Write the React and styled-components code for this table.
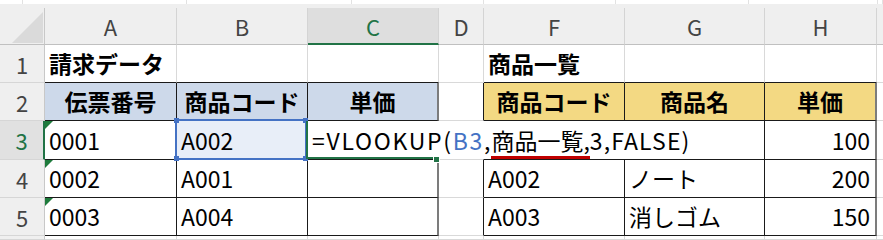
import React from 'react';
import styled, { createGlobalStyle } from 'styled-components';

const FONT = `"Noto Sans CJK JP", "Noto Sans", sans-serif`;

const Global = createGlobalStyle`
  html, body { margin: 0; padding: 0; background: #ffffff; }
  body { width: 883px; height: 240px; overflow: hidden; font-family: ${FONT}; }
`;

const GRID_LINE = '#d9d9d9';
const DARK = '#1a1a1a';
const GREEN = '#217346';
const BLUE = '#4472c4';

const COLS = [45, 132, 131, 131, 45, 141, 140, 112];
const ROWS = [37, 38, 38, 39, 38, 38];

const Page = styled.div`
  width: 883px;
  height: 240px;
  overflow: hidden;
  background: #ffffff;
`;

const TopStrip = styled.div`
  display: flex;
  height: 4px;
  background: #ffffff;
`;

const StripSeg = styled.div`
  box-sizing: border-box;
  flex: ${p => (p.$w ? `0 0 ${p.$w}px` : '1 1 auto')};
  border-right: 1px solid #e2e2e2;
`;

const Sheet = styled.div`
  display: grid;
  grid-template-columns: ${COLS.map(w => `${w}px`).join(' ')} 1fr;
  grid-template-rows: 4px ${ROWS.map(h => `${h}px`).join(' ')} 1fr;
  height: 236px;
  font-family: ${FONT};
`;

const Band = styled.div`
  grid-column: 1 / -1;
  background: #efefef;
`;

const Corner = styled.div`
  position: relative;
  box-sizing: border-box;
  background: #efefef;
  border-right: 1px solid #c8c8c8;
  border-bottom: 1px solid #c0c0c0;
`;

const CornerTriangle = styled.div`
  position: absolute;
  right: 1px;
  bottom: 1px;
  width: 31px;
  height: 31px;
  background: #dadada;
  clip-path: polygon(100% 0, 100% 100%, 0 100%);
`;

const ColHead = styled.div`
  box-sizing: border-box;
  display: flex;
  align-items: center;
  justify-content: center;
  background: ${p => (p.$active ? '#dedede' : '#efefef')};
  color: ${p => (p.$active ? GREEN : '#444444')};
  border-right: 1px solid #d4d4d4;
  border-bottom: ${p => (p.$active ? `2px solid ${GREEN}` : '1px solid #c0c0c0')};
  font-size: 22px;
  line-height: 1;
`;

const RowHead = styled.div`
  box-sizing: border-box;
  display: flex;
  align-items: center;
  justify-content: center;
  background: ${p => (p.$active ? '#e1e1e1' : '#efefef')};
  color: ${p => (p.$active ? GREEN : '#444444')};
  border-right: ${p => (p.$active ? `2px solid ${GREEN}` : '1px solid #c8c8c8')};
  border-bottom: 1px solid #d6d6d6;
  font-size: 22px;
  line-height: 1;
`;

const Cell = styled.div`
  position: relative;
  box-sizing: border-box;
  display: flex;
  align-items: center;
  justify-content: ${p =>
    p.$align === 'center' ? 'center' : p.$align === 'right' ? 'flex-end' : 'flex-start'};
  padding: 0 ${p => (p.$align === 'right' ? '5px' : '4px')} 0 4px;
  background: ${p => p.$bg || '#ffffff'};
  border-right: ${p => p.$right};
  border-bottom: ${p => p.$bottom};
  font-size: 23px;
  font-weight: ${p => (p.$bold ? 700 : 400)};
  color: #000000;
  white-space: nowrap;
  line-height: 1;
  z-index: ${p => p.$z || 'auto'};
`;

const ErrorMark = styled.div`
  position: absolute;
  left: 0;
  top: 0;
  width: 0;
  height: 0;
  border-top: 8px solid #1e7b3c;
  border-right: 8px solid transparent;
`;

const RefFrame = styled.div`
  position: absolute;
  left: -2px;
  top: -2px;
  right: 0;
  bottom: -1px;
  border: 2px solid ${BLUE};
  pointer-events: none;
`;

const RefHandle = styled.div`
  position: absolute;
  width: 5px;
  height: 5px;
  background: ${BLUE};
  ${p => (p.$top ? 'top: -3px;' : 'bottom: -3px;')}
  ${p => (p.$left ? 'left: -3px;' : 'right: -3px;')}
`;

const EditBox = styled.div`
  position: absolute;
  left: 0;
  top: 0;
  width: 456px;
  height: 38px;
  box-sizing: border-box;
  display: flex;
  align-items: center;
  padding-left: 4px;
  background: #ffffff;
  font-size: 23px;
  color: #000000;
  white-space: nowrap;
  line-height: 1;
`;

const FormulaPart = styled.span`
  letter-spacing: ${p => p.$ls || 0}px;
`;

const RefText = styled.span`
  color: ${BLUE};
  letter-spacing: ${p => p.$ls || 0}px;
`;

const RangeName = styled.span`
  display: inline-block;
  padding-bottom: 4px;
  margin-bottom: -7px;
  border-bottom: 3px solid #c00000;
`;

const ActiveFrame = styled.div`
  position: absolute;
  left: -2px;
  top: 0;
  width: 132px;
  bottom: 0;
  box-sizing: border-box;
  border-left: 2px solid ${GREEN};
  border-bottom: 2px solid ${GREEN};
`;

const FillHandle = styled.div`
  position: absolute;
  left: 126px;
  bottom: -3px;
  width: 5px;
  height: 5px;
  background: ${GREEN};
  box-shadow: 0 0 0 1px #ffffff;
`;

const LETTERS = ['A', 'B', 'C', 'D', 'F', 'G', 'H', ''];

const BLUE_HEAD = '#cdd9ea';
const GOLD_HEAD = '#f3d983';

// row index 1..6, col index 0..7 (A,B,C,D,F,G,H,I)
const DATA = {
  1: [
    { t: '請求データ', bold: true },
    {}, {}, {},
    { t: '商品一覧', bold: true },
    {}, {}, {},
  ],
  2: [
    { t: '伝票番号', bold: true, align: 'center', bg: BLUE_HEAD },
    { t: '商品コード', bold: true, align: 'center', bg: BLUE_HEAD },
    { t: '単価', bold: true, align: 'center', bg: BLUE_HEAD },
    {},
    { t: '商品コード', bold: true, align: 'center', bg: GOLD_HEAD },
    { t: '商品名', bold: true, align: 'center', bg: GOLD_HEAD },
    { t: '単価', bold: true, align: 'center', bg: GOLD_HEAD },
    {},
  ],
  3: [
    { t: '0001', mark: true },
    { t: 'A002', ref: true },
    { edit: true },
    {}, {}, {},
    { t: '100', align: 'right' },
    {},
  ],
  4: [
    { t: '0002', mark: true },
    { t: 'A001' },
    {}, {},
    { t: 'A002' },
    { t: 'ノート' },
    { t: '200', align: 'right' },
    {},
  ],
  5: [
    { t: '0003', mark: true },
    { t: 'A004' },
    {}, {},
    { t: 'A003' },
    { t: '消しゴム' },
    { t: '150', align: 'right' },
    {},
  ],
  6: [{}, {}, {}, {}, {}, {}, {}, {}],
};

const bordered = (r, c) =>
  r >= 2 && r <= 5 && ((c >= 0 && c <= 2) || (c >= 4 && c <= 6));

function rightBorder(r, c) {
  if (bordered(r, c) && !bordered(r, c + 1)) return '2px solid #7c7c7c';
  if (bordered(r, c) || bordered(r, c + 1)) return `1px solid ${DARK}`;
  return `1px solid ${GRID_LINE}`;
}

function bottomBorder(r, c) {
  if (bordered(r, c) || bordered(r + 1, c)) return `1px solid ${DARK}`;
  return `1px solid ${GRID_LINE}`;
}

function Formula() {
  return (
    <EditBox>
      <FormulaPart $ls={1.7}>=VLOOKUP(</FormulaPart>
      <RefText $ls={1.7}>B3</RefText>
      <FormulaPart $ls={1}>,</FormulaPart>
      <RangeName>商品一覧,</RangeName>
      <FormulaPart $ls={1.1}>3,FALSE)</FormulaPart>
    </EditBox>
  );
}

function DataCell({ r, c, cell }) {
  return (
    <Cell
      $align={cell.align}
      $bold={cell.bold}
      $bg={cell.ref ? '#e8eef8' : cell.bg}
      $right={rightBorder(r, c)}
      $bottom={bottomBorder(r, c)}
      $z={cell.edit ? 5 : cell.ref ? 4 : undefined}
    >
      {cell.mark && <ErrorMark />}
      {cell.t}
      {cell.ref && (
        <RefFrame>
          <RefHandle $top $left />
          <RefHandle $top />
          <RefHandle $left />
          <RefHandle />
        </RefFrame>
      )}
      {cell.edit && (
        <>
          <Formula />
          <ActiveFrame />
          <FillHandle />
        </>
      )}
    </Cell>
  );
}

export default function App() {
  const strip = [23, 164, 165, 132, 132, 133, 129, 0];
  return (
    <Page>
      <Global />
      <TopStrip>
        {strip.map((w, i) => (
          <StripSeg key={i} $w={w} />
        ))}
      </TopStrip>
      <Sheet>
        <Band />
        <Corner>
          <CornerTriangle />
        </Corner>
        {LETTERS.map((l, i) => (
          <ColHead key={i} $active={l === 'C'}>
            {l}
          </ColHead>
        ))}
        {[1, 2, 3, 4, 5, 6].map(r => (
          <React.Fragment key={r}>
            <RowHead $active={r === 3}>{r < 6 ? r : ''}</RowHead>
            {DATA[r].map((cell, c) => (
              <DataCell key={c} r={r} c={c} cell={cell} />
            ))}
          </React.Fragment>
        ))}
      </Sheet>
    </Page>
  );
}
